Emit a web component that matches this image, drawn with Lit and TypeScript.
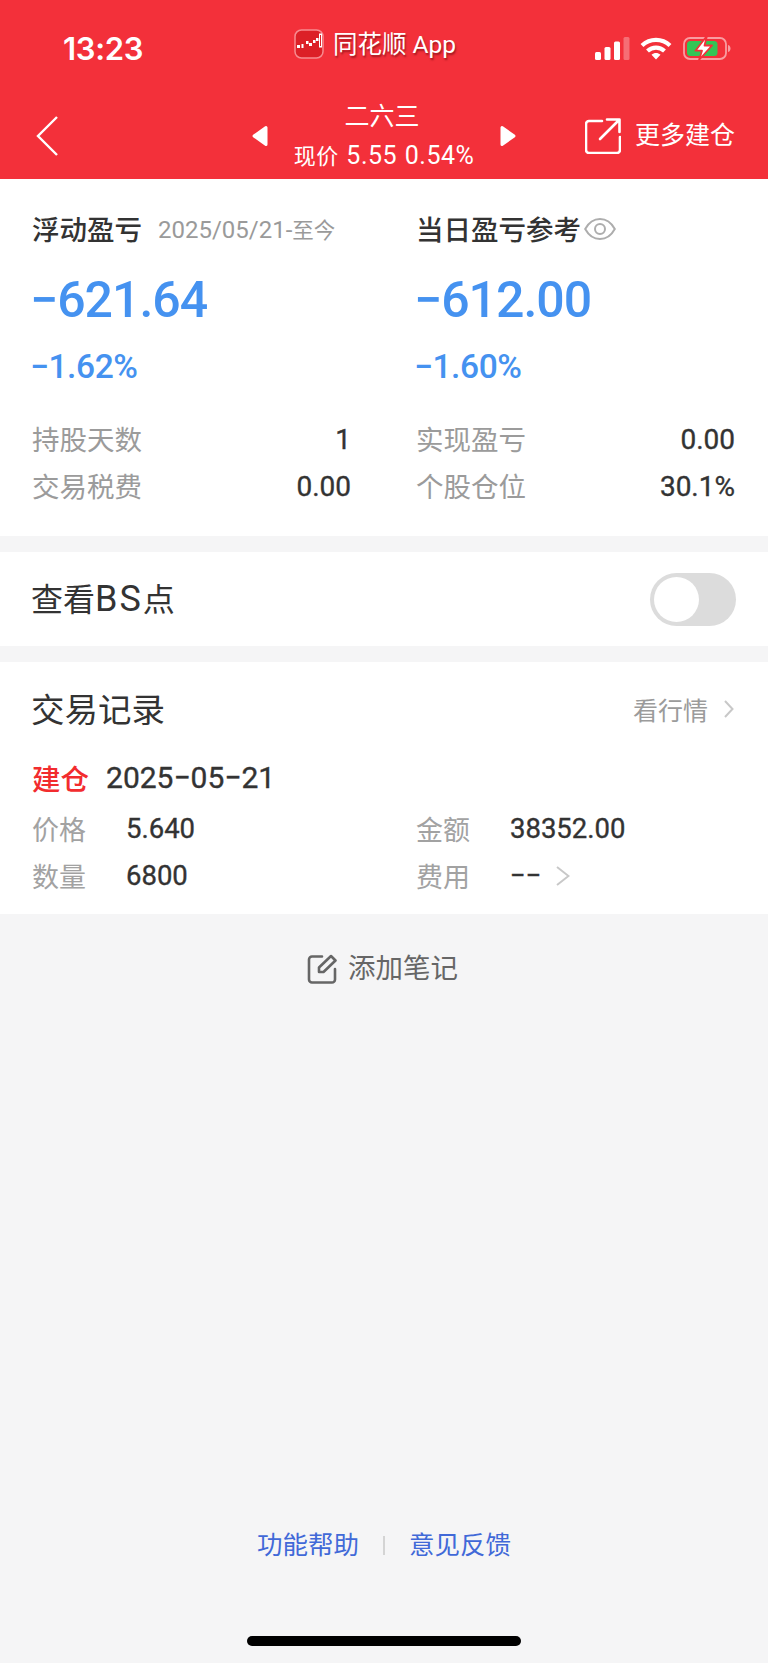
import { LitElement, html, css, svg } from "lit";
import { customElement } from "lit/decorators.js";

@customElement("app-root")
export class AppRoot extends LitElement {
  static styles = css`
    :host { display: block; font-family: Roboto, "Noto Sans CJK SC", "Noto Sans", sans-serif; }
    * { box-sizing: border-box; }
    .page { width: 768px; min-height: 1663px; background: #f5f5f6; display: flex; flex-direction: column; color: #333; }
    svg { display: block; flex: none; }

    .head { background: #f3303a; color: #fff; height: 179px; display: flex; flex-direction: column; }
    .status { height: 92px; display: grid; grid-template-columns: 231px auto 1fr; align-items: center; padding: 0 37px 0 63px; }
    .time { font: 600 31px/36px Inter, sans-serif; padding-top: 6px; letter-spacing: -0.3px; }
    .app { display: flex; align-items: center; gap: 9px; font-size: 24.5px; line-height: 32px; padding-bottom: 3px; text-shadow: 1px 2px 2px rgba(90,0,10,.55); }
    .app svg { margin-bottom: 1px; }
    .sys { display: flex; align-items: center; justify-content: flex-end; gap: 10px; padding-top: 4px; }
    .sys .w { margin-right: 1px; display: block; }
    .nav { flex: 1; display: grid; grid-template-columns: 1fr auto 1fr; align-items: center; padding: 0 33px 0 36px; }
    .switch { display: flex; align-items: center; gap: 24px; margin-left: -3px; }
    .stock { text-align: center; width: 184px; }
    .stock .name { font-size: 25px; line-height: 30px; height: 41px; padding: 1px 4px 0 0; }
    .stock .price { font-size: 25px; line-height: 28px; white-space: nowrap; letter-spacing: .5px; word-spacing: 1px; }
    .stock .price span { font-size: 22px; }
    .more { display: flex; align-items: center; justify-content: flex-end; gap: 14px; font-size: 25px; line-height: 32px; }

    section { background: #fff; }
    .summary { margin: 0; padding: 29px 33px 26px 32px; display: grid; grid-template-columns: 319px 319px; column-gap: 65px; }
    .title { height: 40px; display: flex; align-items: center; font-size: 27.5px; font-weight: 500; color: #333; white-space: nowrap; }
    .date { font-size: 24px; color: #9a9a9a; margin-left: 16px; font-weight: 400; }
    .date span { font-size: 21.500px; }
    .title svg { margin: 2px 0 0 3px; }
    .big { margin: 22px 0 0 -2px; font-size: 50px; line-height: 60px; font-weight: 500; color: #4592f0; letter-spacing: -1px; }
    .pct { margin: 17px 0 0 -2px; font-size: 33.5px; line-height: 40px; font-weight: 500; color: #4592f0; letter-spacing: -0.4px; }
    .rows { margin-top: 29px; }
    .row { display: flex; justify-content: space-between; align-items: center; height: 47px; font-size: 28px; color: #333; }
    .row .k { color: #9b9b9b; font-size: 27.500px; padding-bottom: 4px; }
    .row .v { -webkit-text-stroke: 0.35px currentColor; }

    .bs { margin-top: 16px; height: 94px; padding: 0 32px 0 31px; display: flex; align-items: center; justify-content: space-between; font-size: 32px; color: #333; }
    .bs .lbl { padding-bottom: 4px; }
    .bs .lbl span { font-size: 36px; letter-spacing: 2px; }
    .toggle { width: 86px; height: 53px; border-radius: 27px; background: #dcdcdc; padding: 4px; }
    .toggle i { display: block; width: 45px; height: 45px; border-radius: 50%; background: #fff; }

    .trades { margin-top: 16px; height: 252px; padding: 0 33px 0 32px; display: flex; flex-direction: column; }
    .th { height: 94px; display: flex; align-items: center; justify-content: space-between; font-size: 33.5px; color: #333; }
    .th > span:first-child { padding-bottom: 4px; margin-left: -1px; }
    .look { display: flex; align-items: center; gap: 16px; font-size: 25px; color: #9b9b9b; padding-right: 1px; }
    .rec { height: 42px; display: flex; align-items: center; gap: 17px; font-size: 30px; color: #333; }
    .rec span { -webkit-text-stroke: 0.35px currentColor; }
    .rec b { font-weight: 500; font-size: 28.500px; color: #f22c2e; }
    .grid { margin-top: 7px; display: grid; grid-template-columns: 384px 1fr; }
    .cell { height: 47px; display: flex; align-items: center; font-size: 27.5px; color: #333; }
    .cell .k { width: 94px; color: #a2a2a2; flex: none; font-size: 27px; }
    .cell .v { -webkit-text-stroke: 0.35px currentColor; }
    .cell svg { margin-left: 15px; }

    .note { margin-top: 35px; padding-right: 3px; display: flex; align-items: center; justify-content: center; gap: 11px; font-size: 27.5px; color: #666; line-height: 40px; }
    .foot { margin-top: auto; display: flex; align-items: center; justify-content: center; gap: 24px; font-size: 25.500px; color: #4169d8; line-height: 32px; }
    .foot i { width: 2px; height: 19px; background: #d4d4d4; }
    .bar { align-self: flex-start; margin: 75px 0 17px 247px; width: 274px; height: 10px; background: #000; border-radius: 5px; }
  `;

  render() {
    const cell = (k: string, v: string, arrow = false) => html`<div class="cell"><span class="k">${k}</span><span class="v">${v}</span>${arrow ? chev(14, 20) : ""}</div>`;
    const row = (k: string, v: string) => html`<div class="row"><span class="k">${k}</span><span class="v">${v}</span></div>`;
    return html`<div class="page">
      <header class="head">
        <div class="status">
          <div class="time">13:23</div>
          <div class="app">${appIcon}<span>同花顺 App</span></div>
          <div class="sys">${signal}<span class="w">${wifi}</span>${battery}</div>
        </div>
        <div class="nav">
          <svg width="22" height="40" viewBox="0 0 22 40" fill="none" stroke="#fff" stroke-width="2.4"><path d="M21 1 2 20l19 19"/></svg>
          <div class="switch">
            <svg width="16" height="22" viewBox="0 0 16 22" fill="#fff" stroke="#fff" stroke-width="3" stroke-linejoin="round"><path d="M14 2.500v17L2 11z"/></svg>
            <div class="stock"><div class="name">二六三</div><div class="price"><span>现价</span> 5.55 0.54%</div></div>
            <svg width="16" height="22" viewBox="0 0 16 22" fill="#fff" stroke="#fff" stroke-width="3" stroke-linejoin="round"><path d="M2 2.500v17L14 11z"/></svg>
          </div>
          <div class="more">
            <svg width="36" height="36" viewBox="0 0 36 36" fill="none" stroke="#fff" stroke-width="2.6" stroke-linecap="round" stroke-linejoin="round"><path d="M17 3H4a3 3 0 0 0-3 3v26a3 3 0 0 0 3 3h28a3 3 0 0 0 3-3V19"/><path d="M15 21 34 2M22 1.500h12.500V14"/></svg>
            <span>更多建仓</span>
          </div>
        </div>
      </header>

      <section class="summary">
        <div>
          <div class="title">浮动盈亏<span class="date">2025/05/21-<span>至今</span></span></div>
          <div class="big">−621.64</div>
          <div class="pct">−1.62%</div>
          <div class="rows">${row("持股天数", "1")}${row("交易税费", "0.00")}</div>
        </div>
        <div>
          <div class="title">当日盈亏参考${eye}</div>
          <div class="big">−612.00</div>
          <div class="pct">−1.60%</div>
          <div class="rows">${row("实现盈亏", "0.00")}${row("个股仓位", "30.1%")}</div>
        </div>
      </section>

      <section class="bs"><div class="lbl">查看<span>BS</span>点</div><div class="toggle"><i></i></div></section>

      <section class="trades">
        <div class="th"><span>交易记录</span><span class="look">看行情${chev(10, 18)}</span></div>
        <div class="rec"><b>建仓</b><span>2025−05−21</span></div>
        <div class="grid">
          ${cell("价格", "5.640")}${cell("金额", "38352.00")}
          ${cell("数量", "6800")}${cell("费用", "−−", true)}
        </div>
      </section>

      <div class="note">
        <svg width="30" height="30" viewBox="0 0 30 30" fill="none" stroke="#666" stroke-width="2.6" stroke-linecap="round" stroke-linejoin="round"><path d="M15 2.500H5a3 3 0 0 0-3 3v20a3 3 0 0 0 3 3h20a3 3 0 0 0 3-3V15"/><path d="M12 18v-4.500L24 2l4.500 4.500L16.500 18z"/></svg>
        <span>添加笔记</span>
      </div>

      <div class="foot"><span>功能帮助</span><i></i><span>意见反馈</span></div>
      <div class="bar"></div>
    </div>`;
  }
}

const chev = (w: number, h: number) => html`<svg width=${w} height=${h} viewBox="0 0 ${w} ${h}" fill="none" stroke="#c8c8c8" stroke-width="2"><path d="M1 1 ${w - 1.5} ${h / 2} 1 ${h - 1}"/></svg>`;

const eye = html`<svg width="32" height="24" viewBox="0 0 32 24" fill="none" stroke="#adadad" stroke-width="2"><path d="M1.200 12C5 5 10 2 16 2s11 3 14.800 10C27 19 22 22 16 22S5 19 1.200 12z"/><circle cx="16" cy="12" r="5"/></svg>`;

const appIcon = html`<svg width="30" height="30" viewBox="0 0 30 30"><rect x="1" y="1" width="28" height="28" rx="6.500" fill="#dc2027" stroke="#f78b90" stroke-width="1.500"/>${svg`
  <g fill="#fff"><rect x="3" y="16" width="3" height="3"/><rect x="7.500" y="15" width="2" height="4"/><rect x="12" y="12" width="2.500" height="3"/><rect x="15" y="14" width="3" height="3"/><rect x="19" y="11" width="2.500" height="3"/><rect x="22" y="9" width="2.500" height="3"/></g>
  <rect x="25.500" y="5" width="2" height="13" fill="none" stroke="#fff" stroke-width="1"/>`}</svg>`;

const signal = html`<svg width="35" height="24" viewBox="0 0 35 24" fill="#fff"><rect x="0" y="16" width="6" height="8" rx="1.500"/><rect x="9.500" y="11" width="6" height="13" rx="1.500"/><rect x="19" y="5.500" width="6" height="18.500" rx="1.500"/><rect x="28.500" y="1" width="6" height="23" rx="1.500" fill-opacity=".3"/></svg>`;

const wifi = html`<svg width="32" height="24" viewBox="0 0 32 24" fill="none" stroke="#fff" stroke-width="4.200"><path d="M2 9.500C10 2 22 2 30 9.500"/><path d="M7.500 15c5-4.600 12-4.600 17 0"/><path d="M11.500 18.800c2.700-2.400 6.300-2.400 9 0L16 23.500z" fill="#fff" stroke="none"/></svg>`;

const battery = html`<svg width="48" height="26" viewBox="0 0 48 26"><rect x="1" y="3" width="42" height="21" rx="6" fill="none" stroke="#f99ca1" stroke-width="1.800"/><path d="M45 10c2 .6 2.500 2 2.500 3.500S47 16.400 45 17z" fill="#f99ca1"/><rect x="4" y="6" width="30.500" height="15" rx="3.500" fill="#34c555"/><path d="M24 .7 12.500 15.700H19L16 25 29 10.500H21.500z" fill="#fff" stroke="#f3303a" stroke-width="1.800" stroke-linejoin="round"/></svg>`;
